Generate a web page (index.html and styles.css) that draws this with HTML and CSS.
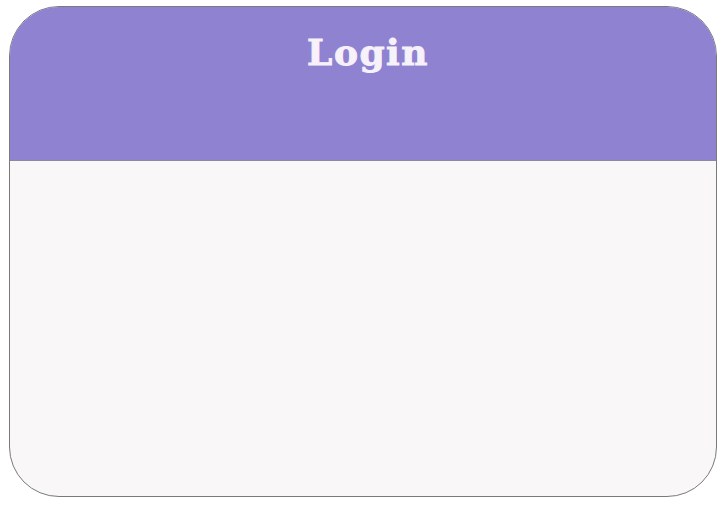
FILE: index.html
```html
<!DOCTYPE html>
<html>
<head>
<meta charset="utf-8">
<link rel="stylesheet" href="styles.css">
</head>
<body>
<div class="card">
  <div class="card-header">
    <h1 class="title">Login</h1>
  </div>
  <div class="card-body"></div>
</div>
</body>
</html>
```
FILE: styles.css
```css
html, body {
  margin: 0;
  padding: 0;
  background: #ffffff;
}
body {
  padding: 6px 10px 13px 9px;
  box-sizing: border-box;
  height: 510px;
}
.card {
  box-sizing: border-box;
  height: 491px;
  border: 1px solid #7a7a7a;
  border-radius: 50px;
  overflow: hidden;
  display: flex;
  flex-direction: column;
  background: #f9f7f8;
}
.card-header {
  height: 153px;
  flex: none;
  background: #8f83d1;
  border-bottom: 1px solid #8a8a9a;
  display: flex;
  justify-content: center;
}
.title {
  margin: 23px 0 0 0;
  padding-left: 10px;
  font-family: "DejaVu Serif", serif;
  font-weight: bold;
  font-size: 36px;
  line-height: 44px;
  letter-spacing: 1.5px;
  -webkit-text-stroke: 0.9px #f7f1fa;
  color: #f7f1fa;
}
.card-body {
  flex: 1;
}
```
